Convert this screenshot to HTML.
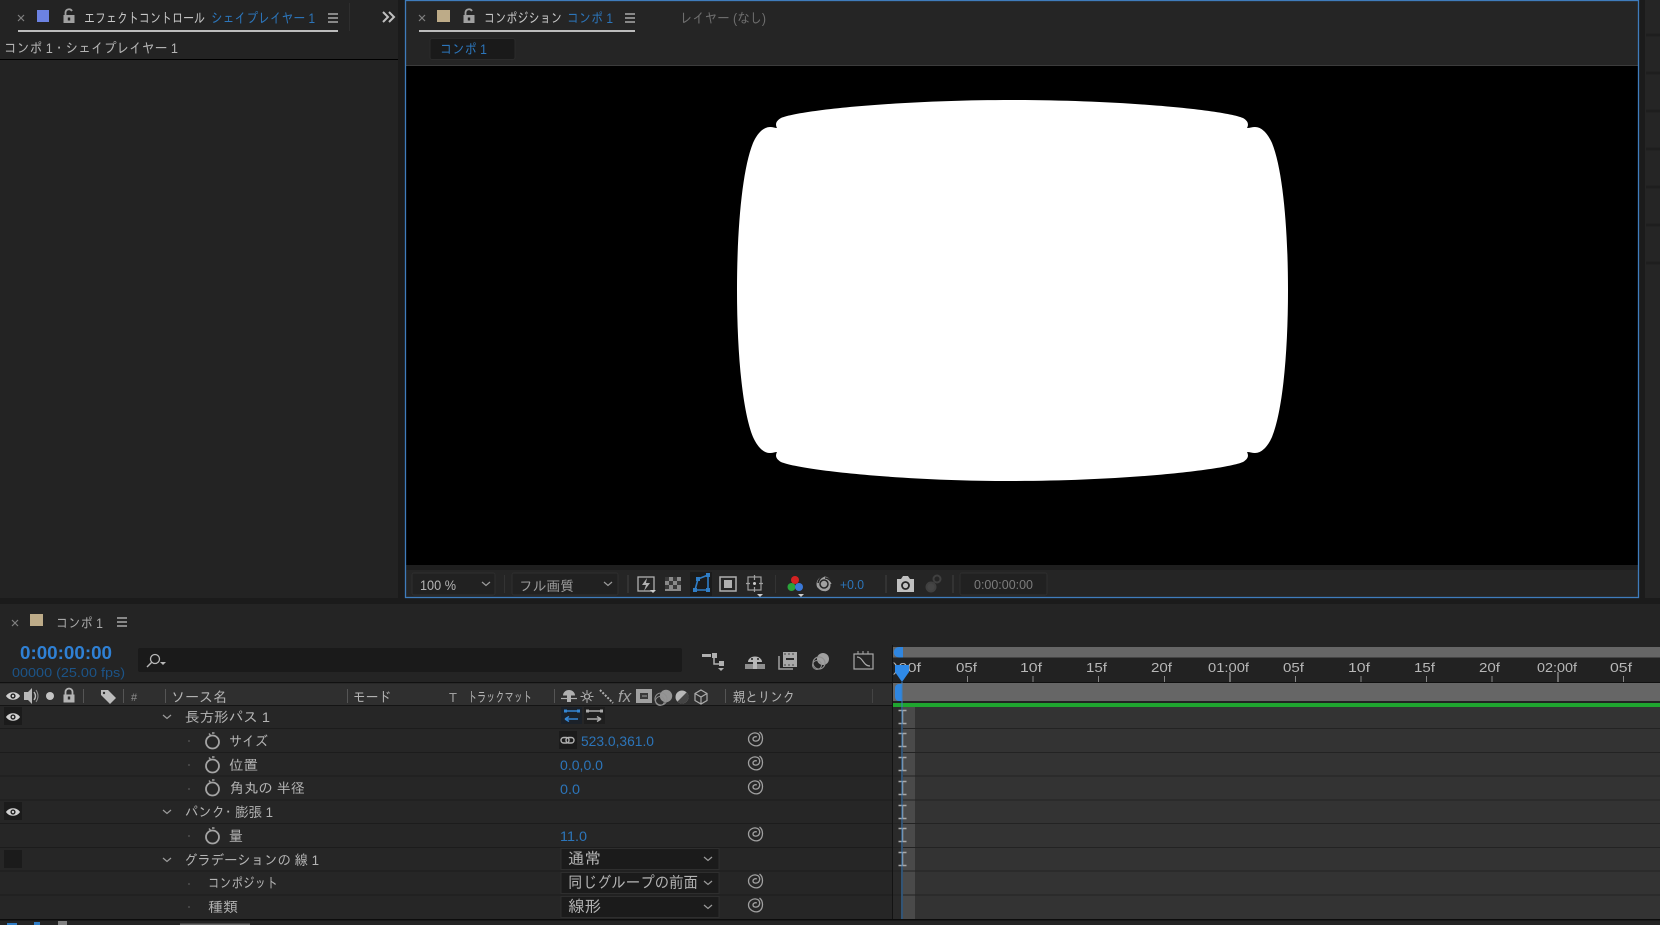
<!DOCTYPE html>
<html lang="ja"><head><meta charset="utf-8"><title>After Effects</title>
<style>
html,body{margin:0;padding:0;background:#1b1b1b;width:1660px;height:925px;overflow:hidden}
svg{display:block}
text{font-family:"Liberation Sans","IPAGothic",sans-serif;font-size:14px;fill:#b4b4b4}
.b{fill:#2c75ba}
.d{fill:#6e6e6e}
.t{font-size:13px;fill:#b8b8b8}
</style></head><body>
<svg width="1660" height="925" viewBox="0 0 1660 925" xmlns="http://www.w3.org/2000/svg">
<defs>
<g id="eye"><path d="M-7 0C-4 -5 4 -5 7 0C4 5 -4 5 -7 0Z" fill="#d0d0d0"/><circle r="2.6" fill="#222"/><circle r="1.2" fill="#d0d0d0"/></g>
<g id="sw"><circle cy="1" r="6.500" fill="none" stroke="#a4a4a4" stroke-width="1.800"/><path d="M-3.500 -7.500L-1.500 -5M-.5 -8H2" stroke="#a4a4a4" stroke-width="1.400" fill="none"/></g>
<path id="sp" d="M3.500 -7C7.500 -4 7.500 3 3.500 6C-1 8.500 -7.500 5 -7.500 0C-7.500 -4.500 -3 -6.500 0 -6C3.500 -5.500 4.500 -2 3 .5C1.500 2.800 -3 2.600 -3 0C-3 -1.800 -1 -2.800 .8 -2" fill="none" stroke="#a0a0a0" stroke-width="1.300"/>
<path id="ib" d="M-4 -6.500H4M0 -6.500V6.500M-4 6.500H4" fill="none" stroke="#a8a8a8" stroke-width="1.500"/>
<path id="chev" d="M-4 -2L0 1.500L4 -2" fill="none" stroke="#9c9c9c" stroke-width="1.200"/>
<g id="burger"><path d="M0 0H10M0 4H10M0 8H10" stroke="#aaa" stroke-width="1.400" fill="none"/></g>
<g id="x"><path d="M-3 -3L3 3M3 -3L-3 3" stroke="#808080" stroke-width="1.200" fill="none"/></g>
<g id="lock"><path d="M-3.500 -1V-3.500A3.500 3.500 0 0 1 3 -5" fill="none" stroke="#a0a0a0" stroke-width="1.800"/><rect x="-5.500" y="-1" width="11" height="8" fill="#a0a0a0"/><rect x="-1.200" y="1.500" width="2.400" height="3" fill="#222"/></g>
<g id="clock"><path d="M-3.500 0V-3A3.500 3.500 0 0 1 3.500 -3V0" fill="none" stroke="#b4b4b4" stroke-width="1.800"/><rect x="-5.500" y="-.5" width="11" height="8" fill="#b4b4b4"/><rect x="-1.200" y="1.500" width="2.400" height="3" fill="#2f2f2f"/></g>
</defs>

<rect width="1660" height="925" fill="#1b1b1b"/>
<!-- effect panel -->
<rect x="0" y="0" width="398" height="598" fill="#232323"/>
<rect x="0" y="59" width="398" height="1" fill="#000"/>
<rect x="349" y="3" width="1" height="28" fill="#2e2e2e"/>
<rect x="18" y="30" width="320" height="2" fill="#bcbcbc"/>
<use href="#x" x="21" y="18"/>
<rect x="37" y="10" width="12" height="12" fill="#6c82e2"/>
<use href="#lock" x="69" y="16"/>
<text x="84" y="23" textLength="121" lengthAdjust="spacingAndGlyphs" style="fill:#c8c8c8">エフェクトコントロール</text>
<text class="b" x="211" y="23" textLength="104" lengthAdjust="spacingAndGlyphs">シェイプレイヤー 1</text>
<use href="#burger" x="328" y="14"/>
<path d="M383 12L388 17L383 22M389 12L394 17L389 22" fill="none" stroke="#c0c0c0" stroke-width="2"/>
<text x="4" y="53" textLength="174" lengthAdjust="spacingAndGlyphs">コンポ 1・シェイプレイヤー 1</text>

<!-- comp panel -->
<rect x="405" y="0" width="1234" height="598" fill="#252525"/>
<rect x="406" y="66" width="1232" height="499" fill="#000"/>
<rect x="406" y="65" width="1232" height="1" fill="#3c3c3c"/>
<rect x="406" y="565" width="1232" height="5" fill="#1e1e1e"/>
<rect x="405.500" y=".5" width="1233" height="597" fill="none" stroke="#3f7cbc" stroke-width="1.300"/>
<use href="#x" x="422" y="18"/>
<rect x="437" y="10" width="13" height="12" fill="#bdab88"/>
<use href="#lock" x="469" y="16"/>
<text x="484" y="23" textLength="78" lengthAdjust="spacingAndGlyphs" style="fill:#c8c8c8">コンポジション</text>
<text class="b" x="567" y="23" textLength="46" lengthAdjust="spacingAndGlyphs">コンポ 1</text>
<use href="#burger" x="625" y="14"/>
<rect x="419" y="30" width="216" height="2" fill="#bcbcbc"/>
<text class="d" x="680" y="23" textLength="86" lengthAdjust="spacingAndGlyphs">レイヤー (なし)</text>
<rect x="430" y="38.500" width="85" height="21" rx="2" fill="#1a1a1a" stroke="#2b2b2b"/>
<text class="b" x="440" y="54" textLength="47" lengthAdjust="spacingAndGlyphs">コンポ 1</text>

<!-- white shape -->
<path fill="#fff" d="M777 128C775 124 776 121 781 118C800 110 900 100 1012 100C1124 100 1224 110 1243 118C1248 121 1249 124 1247 128C1250 128 1252 127 1255 127C1262 127 1268 134 1272 143C1283 170 1288 230 1288 290C1288 350 1283 410 1272 437C1268 446 1262 453 1255 453C1252 453 1250 452 1247 452C1249 456 1248 459 1243 462C1224 470 1124 481 1012 481C900 481 800 470 781 462C776 459 775 456 777 452C775 452 773 453 770 453C763 453 757 446 753 437C742 410 737 350 737 290C737 230 742 170 753 143C757 134 763 127 770 127C773 127 775 128 777 128Z"/>

<!-- comp toolbar -->
<rect x="412" y="573" width="83" height="22" rx="2" fill="#212121" stroke="#2e2e2e"/>
<text x="420" y="590" textLength="36" lengthAdjust="spacingAndGlyphs">100 %</text>
<use href="#chev" x="486" y="584"/>
<rect x="504" y="575" width="1" height="18" fill="#333"/>
<rect x="512" y="573" width="106" height="22" rx="2" fill="#212121" stroke="#2e2e2e"/>
<text x="519" y="591" textLength="55" lengthAdjust="spacingAndGlyphs" style="fill:#9c9c9c">フル画質</text>
<use href="#chev" x="608" y="584"/>
<rect x="627" y="575" width="2" height="18" fill="#333"/>
<rect x="638" y="577" width="16" height="14" fill="none" stroke="#b0b0b0" stroke-width="1.300"/>
<path d="M647 578L642 585H646L644 591L650 583H646Z" fill="#b0b0b0"/><path d="M650 590H656L653 593Z" fill="#ccc"/>
<rect x="665" y="577" width="16" height="14" fill="#8a8a8a"/>
<path d="M665 577h4v4h-4zM673 577h4v4h-4zM669 581h4v4h-4zM677 581h4v4h-4zM665 585h4v4h-4zM673 585h4v4h-4z" fill="#3a3a3a"/>
<rect x="690" y="572" width="22" height="24" fill="#1b1b1b"/>
<path d="M695 590L698 579L708 575L708 590Z" fill="none" stroke="#2f7dc6" stroke-width="1.600"/>
<g fill="#2f7dc6"><rect x="693" y="588" width="4" height="4"/><rect x="696" y="577" width="4" height="4"/><rect x="706" y="573" width="4" height="4"/><rect x="706" y="588" width="4" height="4"/></g>
<rect x="720" y="577" width="16" height="14" fill="none" stroke="#b0b0b0" stroke-width="1.500"/><rect x="724" y="580" width="8" height="8" fill="#b0b0b0"/>
<rect x="748" y="577" width="13" height="13" fill="none" stroke="#a0a0a0" stroke-width="1.200"/><path d="M754.500 575V580M754.500 587V592M746 583.500H750M759 583.500H763" stroke="#a0a0a0" stroke-width="1.200"/><circle cx="754.500" cy="583.500" r="1.500" fill="#ccc"/><path d="M757 594H763L760 597Z" fill="#ccc"/>
<rect x="775" y="575" width="1" height="18" fill="#333"/>
<circle cx="795" cy="580" r="4" fill="#d42222"/><circle cx="791.500" cy="587" r="4" fill="#2aa33a"/><circle cx="799" cy="587" r="4" fill="#3a78d8"/><path d="M798 594H804L801 597Z" fill="#ccc"/>
<circle cx="824" cy="584" r="7.500" fill="#a0a0a0"/><path d="M824 576Q819 578 818 583M832 583Q829 578 825 578M829 591Q832 587 831 584M817 588Q820 592 825 592M820 584A4 4 0 0 1 828 584A4 4 0 0 1 820 584" stroke="#252525" stroke-width="1.500" fill="none"/>
<text class="b" x="840" y="589" textLength="24" lengthAdjust="spacingAndGlyphs" style="font-size:13px">+0.0</text>
<rect x="885" y="575" width="2" height="18" fill="#333"/>
<path d="M897 579H901L903 576H908L910 579H914V592H897Z" fill="#c0c0c0"/><circle cx="905.500" cy="585.500" r="3.500" fill="none" stroke="#252525" stroke-width="1.800"/>
<circle cx="931" cy="587" r="4.500" fill="#454545" stroke="#404040" stroke-width="2"/><circle cx="937" cy="579" r="3.500" fill="none" stroke="#404040" stroke-width="2"/>
<rect x="952" y="575" width="2" height="18" fill="#333"/>
<rect x="960" y="573" width="87" height="22" rx="2" fill="#212121" stroke="#2e2e2e"/>
<text class="d" x="974" y="589" textLength="59" lengthAdjust="spacingAndGlyphs" style="font-size:13px;fill:#7c7c7c">0:00:00:00</text>

<!-- right strip -->
<rect x="1645" y="0" width="15" height="598" fill="#252525"/>
<path d="M1646 35h14M1646 73h14M1646 111h14M1646 149h14M1646 187h14M1646 225h14M1646 263h14" stroke="#1e1e1e" stroke-width="3"/>

<!-- timeline panel -->
<rect x="0" y="604" width="1660" height="321" fill="#242424"/>
<use href="#x" x="15" y="623"/>
<rect x="30" y="614" width="13" height="12" fill="#bdab88"/>
<text x="56" y="628" textLength="47" lengthAdjust="spacingAndGlyphs" style="fill:#a8a8a8">コンポ 1</text>
<use href="#burger" x="117" y="618"/>
<text x="20" y="659" textLength="92" lengthAdjust="spacingAndGlyphs" style="font-size:18px;font-weight:bold;fill:#2f80d4">0:00:00:00</text>
<text x="12" y="677" textLength="113" lengthAdjust="spacingAndGlyphs" style="font-size:13px;fill:#1c5488">00000 (25.00 fps)</text>
<rect x="138" y="648" width="544" height="24" rx="2" fill="#1a1a1a"/>
<circle cx="155" cy="659" r="4.500" fill="none" stroke="#b8b8b8" stroke-width="1.300"/><path d="M151.500 662.500L147 667" stroke="#b8b8b8" stroke-width="1.400"/><path d="M160 662H166L163 665Z" fill="#b8b8b8"/>

<!-- timeline tool icons -->
<rect x="702" y="654" width="9" height="3" fill="#b0b0b0"/><rect x="712" y="653" width="5" height="5" fill="#b0b0b0"/>
<path d="M714 658V664H719" fill="none" stroke="#b0b0b0" stroke-width="1.500"/><rect x="719" y="661" width="5" height="5" fill="#b0b0b0"/>
<path d="M718 668H724L721 671Z" fill="#b0b0b0"/>
<path d="M745 664H765V669H745Z" fill="#8e8e8e"/><path d="M748 662A7 5.500 0 0 1 762 662H757V669H753V662Z" fill="#b8b8b8"/><circle cx="752" cy="659" r="1" fill="#222"/><circle cx="758" cy="659" r="1" fill="#222"/>
<rect x="783" y="652" width="14" height="15" fill="#a8a8a8"/><rect x="786" y="658" width="8" height="2" fill="#2a2a2a"/><path d="M779 656V669H793" fill="none" stroke="#a0a0a0" stroke-width="1.500"/><path d="M785 653v2M789 653v2M793 653v2M785 664v2M789 664v2M793 664v2" stroke="#444"/>
<circle cx="823" cy="659" r="6" fill="#a0a0a0"/><circle cx="819" cy="663" r="6" fill="none" stroke="#909090" stroke-width="1.200"/><circle cx="817" cy="665" r="4.500" fill="none" stroke="#909090" stroke-width="1"/>
<rect x="854" y="654" width="19" height="15" fill="none" stroke="#aaa" stroke-width="1.200"/><path d="M857 657C863 657 863 666 870 666" fill="none" stroke="#aaa" stroke-width="1.200"/><path d="M858 651v3M863 651v3M868 651v3" stroke="#aaa"/>

<!-- column header -->
<rect x="0" y="683" width="892" height="22" fill="#2f2f2f"/>
<rect x="0" y="682" width="1660" height="1.200" fill="#111"/>
<rect x="0" y="705" width="892" height="1" fill="#141414"/>
<use href="#eye" x="13" y="696"/>
<path d="M24 692H28L32 688V704L28 700H24Z" fill="#b8b8b8"/><path d="M34 692Q37 696 34 700" fill="none" stroke="#b8b8b8" stroke-width="1.400"/><path d="M36 690Q40 696 36 702" fill="none" stroke="#909090"/>
<circle cx="50" cy="696" r="4" fill="#c4c4c4"/>
<use href="#clock" x="69" y="695"/><rect x="83" y="689" width="1" height="14" fill="#555"/>
<path d="M101 690H108L116 698L110 704L101 695Z" fill="#bcbcbc"/><circle cx="104" cy="693" r="1.200" fill="#2f2f2f"/>
<rect x="123" y="689" width="1" height="14" fill="#555"/>
<text x="131" y="701" style="font-size:11px;fill:#909090">#</text>
<rect x="165" y="689" width="1" height="14" fill="#555"/>
<text x="171" y="702" textLength="56" lengthAdjust="spacingAndGlyphs">ソース名</text>
<rect x="347" y="689" width="1" height="14" fill="#555"/>
<text x="353" y="702" textLength="38" lengthAdjust="spacingAndGlyphs">モード</text>
<text x="449" y="702" style="fill:#a0a0a0;font-size:13px">T</text>
<text x="468" y="702" textLength="64" lengthAdjust="spacingAndGlyphs">トラックマット</text>
<rect x="554" y="689" width="1" height="14" fill="#555"/>
<path d="M563 695.500A6 5.500 0 0 1 575 695.500H571V702H567V695.500Z" fill="#b0b0b0"/><path d="M561 698.500H577" stroke="#b0b0b0" stroke-width="1.200"/>
<circle cx="587" cy="696.500" r="2.500" fill="none" stroke="#b0b0b0" stroke-width="1.300"/><path d="M587 690v3M587 700v3M580.500 696.500h3M590.500 696.500h3M582.500 692l2 2M589.500 699l2 2M591.500 692l-2 2M584.500 699l-2 2" stroke="#b0b0b0"/>
<path d="M600 690L613 703" stroke="#b0b0b0" stroke-width="2" stroke-dasharray="2 1.500"/>
<text x="618" y="702" style="font-size:17px;font-style:italic;fill:#a0a0a0">fx</text>
<rect x="636" y="689" width="16" height="14" fill="#a0a0a0"/><rect x="640" y="693" width="8" height="6" fill="#3a3a3a"/><rect x="642" y="695.500" width="5" height="1" fill="#a0a0a0"/>
<circle cx="666" cy="696" r="6.200" fill="#949494"/><circle cx="661" cy="699" r="6" fill="none" stroke="#909090" stroke-width="1.100"/><circle cx="660" cy="701" r="4.500" fill="none" stroke="#909090"/>
<circle cx="682" cy="697" r="6.500" fill="#b8b8b8"/><path d="M686.600 692.400A6.500 6.500 0 0 1 677.400 701.600Z" fill="#444"/>
<path d="M701 690L707 693.500V700.500L701 704L695 700.500V693.500Z M695 693.500L701 697L707 693.500M701 697V704" fill="none" stroke="#aaa" stroke-width="1.200"/>
<rect x="725" y="689" width="1" height="14" fill="#555"/>
<text x="733" y="702" textLength="62" lengthAdjust="spacingAndGlyphs">親とリンク</text>
<rect x="872" y="689" width="1" height="14" fill="#444"/>

<!-- left rows -->
<rect x="0" y="706" width="892" height="213" fill="#262626"/>
<path d="M0 728.500H892M0 752.500H892M0 776H892M0 800H892M0 823.500H892M0 847.500H892M0 871H892M0 895H892" stroke="#1c1c1c" stroke-width="1"/>
<rect x="892" y="645" width="1" height="275" fill="#131313"/>

<rect x="4" y="707" width="18" height="18" fill="#1b1b1b"/><use href="#eye" x="13" y="717"/>
<rect x="4" y="802" width="18" height="18" fill="#1b1b1b"/><use href="#eye" x="13" y="812"/>
<rect x="4" y="850" width="18" height="18" fill="#1b1b1b"/>

<use href="#chev" x="167" y="717"/>
<text x="185" y="722" textLength="85" lengthAdjust="spacingAndGlyphs">長方形パス 1</text>
<use href="#sw" x="212.500" y="741"/>
<text x="229" y="746" textLength="39" lengthAdjust="spacingAndGlyphs">サイズ</text>
<use href="#sw" x="212.500" y="765"/>
<text x="229" y="770" textLength="29" lengthAdjust="spacingAndGlyphs">位置</text>
<use href="#sw" x="212.500" y="788"/>
<text x="230" y="793" textLength="75" lengthAdjust="spacingAndGlyphs">角丸の 半径</text>
<use href="#chev" x="167" y="812"/>
<text x="185" y="817" textLength="88" lengthAdjust="spacingAndGlyphs">パンク･ 膨張 1</text>
<use href="#sw" x="212.500" y="836"/>
<text x="229" y="841" textLength="14" lengthAdjust="spacingAndGlyphs">量</text>
<use href="#chev" x="167" y="860"/>
<text x="184" y="865" textLength="135" lengthAdjust="spacingAndGlyphs">グラデーションの 線 1</text>
<text x="208" y="888" textLength="70" lengthAdjust="spacingAndGlyphs">コンポジット</text>
<text x="208" y="912" textLength="30" lengthAdjust="spacingAndGlyphs">種類</text>
<g fill="#444"><rect x="188" y="740" width="2" height="2"/><rect x="188" y="764" width="2" height="2"/><rect x="188" y="788" width="2" height="2"/><rect x="188" y="835" width="2" height="2"/><rect x="188" y="883" width="2" height="2"/><rect x="188" y="906" width="2" height="2"/></g>

<!-- row 1 buttons -->
<rect x="561" y="707" width="21" height="17" fill="#1b2129"/><rect x="584" y="707" width="21" height="17" fill="#1e1e1e"/>
<path d="M565 711H579M565 719H578M565 719L569 716.500M565 719L569 721.500" stroke="#3486d4" stroke-width="1.500" fill="none"/>
<g fill="#3486d4"><rect x="564" y="709.500" width="3" height="3"/><rect x="577" y="709.500" width="3" height="3"/></g>
<path d="M587 711H601M587 719H601M601 719L597 716.500M601 719L597 721.500" stroke="#aaa" stroke-width="1.500" fill="none"/>
<g fill="#aaa"><rect x="586" y="709.500" width="3" height="3"/><rect x="600" y="709.500" width="3" height="3"/></g>

<!-- values -->
<rect x="559" y="731" width="18" height="18" fill="#1b1b1b"/>
<g fill="none" stroke="#b0b0b0" stroke-width="1.400"><rect x="561" y="737.500" width="8" height="5.500" rx="2.700"/><rect x="566" y="737.500" width="8" height="5.500" rx="2.700"/></g>
<text class="b" x="581" y="746" textLength="73" lengthAdjust="spacingAndGlyphs">523.0,361.0</text>
<text class="b" x="560" y="770" textLength="43" lengthAdjust="spacingAndGlyphs">0.0,0.0</text>
<text class="b" x="560" y="794" textLength="20" lengthAdjust="spacingAndGlyphs">0.0</text>
<text class="b" x="560" y="841" textLength="27" lengthAdjust="spacingAndGlyphs">11.0</text>

<use href="#sp" x="756" y="739"/><use href="#sp" x="756" y="763"/><use href="#sp" x="756" y="787"/><use href="#sp" x="756" y="834"/><use href="#sp" x="756" y="881"/><use href="#sp" x="756" y="905"/>

<!-- dropdowns -->
<rect x="561" y="848.500" width="158" height="21" fill="#1b1b1b" stroke="#2e2e2e"/>
<rect x="561" y="872.500" width="158" height="21" fill="#1b1b1b" stroke="#2e2e2e"/>
<rect x="561" y="896.500" width="158" height="21" fill="#1b1b1b" stroke="#2e2e2e"/>
<text x="568" y="864" textLength="33" lengthAdjust="spacingAndGlyphs" style="font-size:16px">通常</text>
<text x="568" y="888" textLength="130" lengthAdjust="spacingAndGlyphs" style="font-size:16px">同じグループの前面</text>
<text x="568" y="912" textLength="33" lengthAdjust="spacingAndGlyphs" style="font-size:16px">線形</text>
<use href="#chev" x="708" y="859"/><use href="#chev" x="708" y="883"/><use href="#chev" x="708" y="907"/>

<!-- timeline right -->
<rect x="893" y="647" width="767" height="10.500" fill="#666"/>
<rect x="893" y="657.500" width="767" height="24.500" fill="#222"/>
<rect x="893" y="683" width="767" height="18" fill="#666"/>
<rect x="893" y="701" width="767" height="2" fill="#222"/>
<rect x="893" y="703" width="767" height="4" fill="#1fa52f"/>
<rect x="893" y="707" width="10" height="213" fill="#2a2a2a"/>
<rect x="903" y="707" width="12" height="213" fill="#4a4a4a"/>
<rect x="915" y="707" width="745" height="213" fill="#333"/>
<path d="M893 728.500H1660M893 752.500H1660M893 776H1660M893 800H1660M893 823.500H1660M893 847.500H1660M893 871H1660M893 895H1660" stroke="#232323" stroke-width="1"/>

<text class="t" x="893" y="672" textLength="28" lengthAdjust="spacingAndGlyphs">)00f</text>
<text class="t" x="956" y="672" textLength="21" lengthAdjust="spacingAndGlyphs">05f</text>
<text class="t" x="1020" y="672" textLength="22" lengthAdjust="spacingAndGlyphs">10f</text>
<text class="t" x="1086" y="672" textLength="21" lengthAdjust="spacingAndGlyphs">15f</text>
<text class="t" x="1151" y="672" textLength="21" lengthAdjust="spacingAndGlyphs">20f</text>
<text class="t" x="1208" y="672" textLength="41" lengthAdjust="spacingAndGlyphs">01:00f</text>
<text class="t" x="1283" y="672" textLength="21" lengthAdjust="spacingAndGlyphs">05f</text>
<text class="t" x="1348" y="672" textLength="22" lengthAdjust="spacingAndGlyphs">10f</text>
<text class="t" x="1414" y="672" textLength="21" lengthAdjust="spacingAndGlyphs">15f</text>
<text class="t" x="1479" y="672" textLength="21" lengthAdjust="spacingAndGlyphs">20f</text>
<text class="t" x="1537" y="672" textLength="40" lengthAdjust="spacingAndGlyphs">02:00f</text>
<text class="t" x="1610" y="672" textLength="22" lengthAdjust="spacingAndGlyphs">05f</text>
<path d="M967.500 676V682M1033 676V682M1098.500 676V682M1164.500 676V682M1295.500 676V682M1361 676V682M1426.500 676V682M1492 676V682M1623.500 676V682" stroke="#888" stroke-width="1"/>
<path d="M1230 672V682M1558 672V682" stroke="#888" stroke-width="1.500"/>

<!-- handles & playhead -->
<path d="M903 647H899A5.250 5.250 0 0 0 899 657.500H903Z" fill="#2f86e0"/>
<path d="M902 684H899A4 4 0 0 0 895 688V697A4 4 0 0 0 899 701H902Z" fill="#2f86e0"/>
<path d="M895 665H909V672L902 682L895 672Z" fill="#2f8ae8"/>
<rect x="901.500" y="682" width="1" height="238" fill="#3a7fc0"/>
<g><use href="#ib" x="902.500" y="717"/><use href="#ib" x="902.500" y="740"/><use href="#ib" x="902.500" y="764"/><use href="#ib" x="902.500" y="788"/><use href="#ib" x="902.500" y="812"/><use href="#ib" x="902.500" y="835"/><use href="#ib" x="902.500" y="859"/></g>
<rect x="901.500" y="707" width="1" height="213" fill="#3a7fc0"/>

<!-- bottom -->
<rect x="0" y="919" width="1660" height="1.500" fill="#0c0c0c"/>
<rect x="0" y="920.500" width="1660" height="5" fill="#232323"/>
<rect x="7" y="923" width="10" height="2" fill="#2f7dc6"/>
<rect x="34" y="922" width="6" height="3" fill="#2f7dc6"/>
<rect x="58" y="921" width="9" height="4" fill="#808080"/>
<rect x="180" y="923.500" width="70" height="1.500" fill="#666"/>
</svg>
</body></html>
